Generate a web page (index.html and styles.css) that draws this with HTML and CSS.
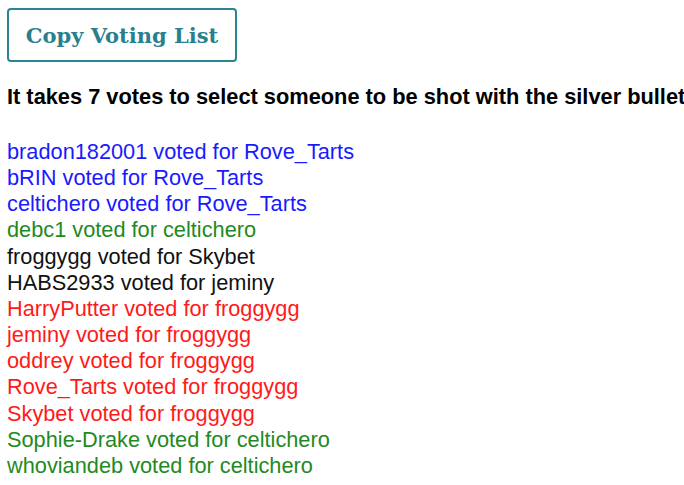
FILE: index.html
```html
<!DOCTYPE html>
<html>
<head>
<meta charset="utf-8">
<link rel="stylesheet" href="styles.css">
</head>
<body>
<button class="copy-btn">Copy Voting List</button>
<h3 class="info">It takes 7 votes to select someone to be shot with the silver bullet</h3>
<div class="votes">
<div class="vote blue">bradon182001 voted for Rove_Tarts</div>
<div class="vote blue">bRIN voted for Rove_Tarts</div>
<div class="vote blue">celtichero voted for Rove_Tarts</div>
<div class="vote green">debc1 voted for celtichero</div>
<div class="vote black">froggygg voted for Skybet</div>
<div class="vote black">HABS2933 voted for jeminy</div>
<div class="vote red">HarryPutter voted for froggygg</div>
<div class="vote red">jeminy voted for froggygg</div>
<div class="vote red">oddrey voted for froggygg</div>
<div class="vote red">Rove_Tarts voted for froggygg</div>
<div class="vote red">Skybet voted for froggygg</div>
<div class="vote green">Sophie-Drake voted for celtichero</div>
<div class="vote green">whoviandeb voted for celtichero</div>
</div>
</body>
</html>
```
FILE: styles.css
```css
html, body {
  margin: 0;
  background: #fff;
  overflow: hidden;
}
body {
  padding: 8px 7px;
  font-family: "Liberation Sans", Arial, sans-serif;
}
.copy-btn {
  display: block;
  width: 230px;
  height: 54px;
  background: #fff;
  border: 2px solid #2a8593;
  border-radius: 4px;
  color: #2a7f8f;
  font-family: "DejaVu Serif", "Liberation Serif", serif;
  font-size: 21px;
  font-weight: 600;
  padding: 0;
  margin: 0;
}
.info {
  margin: 23px 0 0;
  font-size: 21.8px;
  font-weight: bold;
  white-space: nowrap;
  color: #000;
  line-height: 24px;
}
.votes {
  margin-top: 30px;
}
.vote {
  font-size: 21.75px;
  line-height: 26.15px;
  white-space: nowrap;
}
.blue { color: #1a1aff; }
.green { color: #1f8a1f; }
.black { color: #111; }
.red { color: #ff1a1a; }
```
